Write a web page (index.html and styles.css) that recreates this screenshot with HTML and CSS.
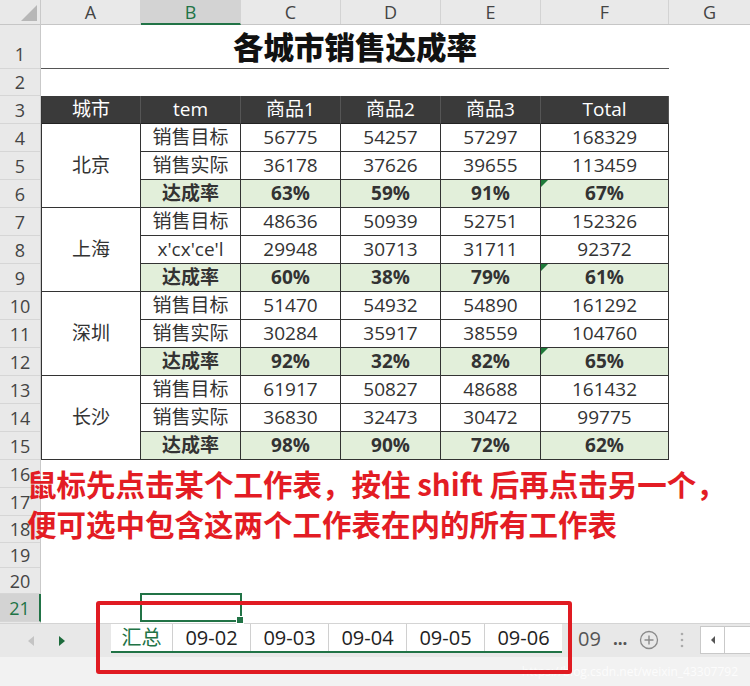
FILE: index.html
```html
<!DOCTYPE html>
<html lang="zh-CN">
<head>
    <meta charset="UTF-8">
    <meta name="viewport" content="width=device-width, initial-scale=1.0">
    <title>各城市销售达成率</title>
    <link rel="stylesheet" href="styles.css">
</head>
<body>
    <div class="app">
        <div class="sheet">
            <!-- row numbers -->
            <div class="rownums">
                <div class="corner">
                    <svg width="41" height="25" viewBox="0 0 41 25"><polygon points="21,21 37,21 37,5" fill="#b7b7b7"/></svg>
                </div>
                <div class="rn rn-title">1</div>
                <div class="rn rn-27">2</div>
                <div class="rn">3</div>
                <div class="rn">4</div>
                <div class="rn">5</div>
                <div class="rn">6</div>
                <div class="rn">7</div>
                <div class="rn">8</div>
                <div class="rn">9</div>
                <div class="rn">10</div>
                <div class="rn">11</div>
                <div class="rn">12</div>
                <div class="rn">13</div>
                <div class="rn">14</div>
                <div class="rn">15</div>
                <div class="rn">16</div>
                <div class="rn">17</div>
                <div class="rn rn-27">18</div>
                <div class="rn rn-25">19</div>
                <div class="rn rn-26">20</div>
                <div class="rn rn-active">21</div>
            </div>

            <div class="cells">
                <div class="colheads">
                    <div class="ch">A</div>
                    <div class="ch ch-active">B</div>
                    <div class="ch">C</div>
                    <div class="ch">D</div>
                    <div class="ch">E</div>
                    <div class="ch ch-wide">F</div>
                    <div class="ch ch-last">G</div>
                </div>

                <div class="title-row">
                    <div class="title">各城市销售达成率</div>
                </div>
                <div class="blank-row"></div>

                <div class="data">
                    <div class="c head">城市</div>
                    <div class="c head">tem</div>
                    <div class="c head">商品1</div>
                    <div class="c head">商品2</div>
                    <div class="c head">商品3</div>
                    <div class="c head">Total</div>

                    <div class="c city">北京</div>
                    <div class="c">销售目标</div><div class="c">56775</div><div class="c">54257</div><div class="c">57297</div><div class="c">168329</div>
                    <div class="c">销售实际</div><div class="c">36178</div><div class="c">37626</div><div class="c">39655</div><div class="c">113459</div>
                    <div class="c rate">达成率</div><div class="c rate">63%</div><div class="c rate">59%</div><div class="c rate">91%</div><div class="c rate flag">67%</div>

                    <div class="c city">上海</div>
                    <div class="c">销售目标</div><div class="c">48636</div><div class="c">50939</div><div class="c">52751</div><div class="c">152326</div>
                    <div class="c">x'cx'ce'l</div><div class="c">29948</div><div class="c">30713</div><div class="c">31711</div><div class="c">92372</div>
                    <div class="c rate">达成率</div><div class="c rate">60%</div><div class="c rate">38%</div><div class="c rate">79%</div><div class="c rate flag">61%</div>

                    <div class="c city">深圳</div>
                    <div class="c">销售目标</div><div class="c">51470</div><div class="c">54932</div><div class="c">54890</div><div class="c">161292</div>
                    <div class="c">销售实际</div><div class="c">30284</div><div class="c">35917</div><div class="c">38559</div><div class="c">104760</div>
                    <div class="c rate">达成率</div><div class="c rate">92%</div><div class="c rate">32%</div><div class="c rate">82%</div><div class="c rate flag">65%</div>

                    <div class="c city">长沙</div>
                    <div class="c">销售目标</div><div class="c">61917</div><div class="c">50827</div><div class="c">48688</div><div class="c">161432</div>
                    <div class="c">销售实际</div><div class="c">36830</div><div class="c">32473</div><div class="c">30472</div><div class="c">99775</div>
                    <div class="c rate">达成率</div><div class="c rate">98%</div><div class="c rate">90%</div><div class="c rate">72%</div><div class="c rate">62%</div>
                </div>

                <div class="blank-rows"></div>
                <div class="sel-row">
                    <div class="sel-cell"></div>
                </div>
            </div>
        </div>

        <div class="tabbar">
            <div class="tabnav">
                <svg class="nav-arrow" width="8" height="12" viewBox="0 0 8 12"><polygon points="7,1 1,6 7,11" fill="#c4c4c4"/></svg>
                <svg class="nav-arrow" width="8" height="12" viewBox="0 0 8 12"><polygon points="1,1 7,6 1,11" fill="#1d6b3c"/></svg>
            </div>
            <div class="tabs">
                <div class="tab tab-active">汇总</div>
                <div class="tab">09-02</div>
                <div class="tab">09-03</div>
                <div class="tab">09-04</div>
                <div class="tab">09-05</div>
                <div class="tab">09-06</div>
            </div>
            <div class="tab-more">09 <b>...</b></div>
            <svg class="add-sheet" width="20" height="20" viewBox="0 0 20 20">
                <circle cx="10" cy="10" r="8.5" fill="none" stroke="#8a8a8a" stroke-width="1.3"/>
                <path d="M10 5.5v9M5.5 10h9" stroke="#8a8a8a" stroke-width="1.4"/>
            </svg>
            <svg class="dots" width="4" height="16" viewBox="0 0 4 16">
                <circle cx="2" cy="2" r="1.3" fill="#ababab"/>
                <circle cx="2" cy="8" r="1.3" fill="#ababab"/>
                <circle cx="2" cy="14" r="1.3" fill="#ababab"/>
            </svg>
            <div class="hscroll">
                <div class="hscroll-btn">
                    <svg width="6" height="10" viewBox="0 0 6 10"><polygon points="5,1 1,5 5,9" fill="#555"/></svg>
                </div>
            </div>
        </div>

        <div class="statusbar">
            <span class="watermark">https://blog.csdn.net/weixin_43307792</span>
        </div>

        <p class="note">鼠标先点击某个工作表，按住 shift 后再点击另一个，<br>便可选中包含这两个工作表在内的所有工作表</p>
        <div class="callout"></div>
    </div>
</body>
</html>
```

FILE: styles.css
```css
* {
    margin: 0;
    padding: 0;
    box-sizing: border-box;
}

body {
    font-family: "Open Sans", "Noto Sans CJK SC", sans-serif;
    background: #ffffff;
    color: #333;
}

.app {
    position: relative;
    width: 750px;
    height: 686px;
    overflow: hidden;
}

.sheet {
    display: flex;
    height: 623px;
}

/* row numbers */
.rownums {
    width: 41px;
    background: #e9e9e9;
    border-right: 1px solid #c9c9c9;
    display: flex;
    flex-direction: column;
}

.corner {
    height: 25px;
    border-bottom: 1px solid #c6c6c6;
}

.corner svg {
    display: block;
}

.rn {
    height: 28px;
    border-bottom: 1px solid #d6d6d6;
    font-size: 18px;
    color: #444;
    display: flex;
    align-items: center;
    justify-content: center;
    line-height: 1;
}

.rn-title {
    height: 44px;
    align-items: flex-end;
    padding-bottom: 5px;
}

.rn-27 { height: 27px; }
.rn-25 { height: 25px; }
.rn-26 { height: 26px; }

.rn-active {
    background: #d3d3d3;
    color: #217346;
    border-right: 2px solid #217346;
    margin-right: -1px;
}

/* cell area */
.cells {
    flex: 1;
    display: flex;
    flex-direction: column;
}

.colheads {
    display: grid;
    grid-template-columns: 100px 100px 100px 100px 100px 128px 81px;
    height: 25px;
    background: #e9e9e9;
    border-bottom: 1px solid #c6c6c6;
}

.ch {
    border-right: 1px solid #d3d3d3;
    font-size: 18px;
    color: #444;
    display: flex;
    align-items: center;
    justify-content: center;
    line-height: 1;
}

.ch-last {
    border-right: none;
}

.ch-active {
    background: #d3d3d3;
    color: #217346;
    border-bottom: 2px solid #217346;
    margin-bottom: -1px;
}

.title-row {
    height: 44px;
}

.title {
    width: 628px;
    height: 44px;
    border-bottom: 1px solid #555;
    font-family: "Noto Sans CJK SC", sans-serif;
    font-size: 30.5px;
    font-weight: 900;
    color: #111;
    text-align: center;
    line-height: 42px;
}

.blank-row {
    height: 27px;
}

/* data table A3:F15 */
.data {
    display: grid;
    grid-template-columns: 99px 100px 100px 100px 100px 128px;
    grid-auto-rows: 28px;
    width: 628px;
    border-left: 1px solid #333;
}

.c {
    position: relative;
    border-right: 1px solid #333;
    border-bottom: 1px solid #333;
    font-size: 19px;
    color: #333;
    display: flex;
    align-items: center;
    justify-content: center;
    line-height: 1;
    white-space: nowrap;
}

.head {
    background: #3a3a3a;
    color: #fff;
    border-right-color: #555;
    border-bottom-color: #222;
}

.city {
    grid-row: span 3;
    background: #fff;
}

.rate {
    background: #e2efda;
    font-weight: 700;
}

.flag::before {
    content: "";
    position: absolute;
    left: 0;
    top: 0;
    border-top: 7px solid #1f7a3a;
    border-right: 7px solid transparent;
}

.blank-rows {
    height: 134px;
}

.sel-row {
    height: 28px;
    padding-left: 99px;
}

.sel-cell {
    position: relative;
    width: 102px;
    height: 29px;
    margin-top: -1px;
    border: 2px solid #217346;
}

.sel-cell::after {
    content: "";
    position: absolute;
    right: -4px;
    bottom: -4px;
    width: 6px;
    height: 6px;
    background: #217346;
    border: 1px solid #fff;
}

/* sheet tabs */
.tabbar {
    height: 34px;
    background: #e8e8e8;
    border-top: 1px solid #d4d4d4;
    display: flex;
    align-items: flex-start;
}

.tabnav {
    width: 111px;
    height: 33px;
    display: flex;
    align-items: center;
    gap: 23px;
    padding-left: 27px;
}

.nav-arrow {
    display: block;
}

.tabs {
    display: flex;
    height: 29px;
    background: #fff;
    border-bottom: 2px solid #217346;
}

.tab {
    width: 78px;
    height: 27px;
    font-size: 20px;
    color: #222;
    display: flex;
    align-items: center;
    justify-content: center;
    line-height: 1;
    border-left: 1px solid #d0d0d0;
}

.tab-active {
    width: 61px;
    color: #217346;
    border-left: none;
}

.tab-more {
    height: 29px;
    display: flex;
    align-items: center;
    gap: 12px;
    padding-left: 16px;
    font-size: 20px;
    color: #555;
    line-height: 1;
    white-space: nowrap;
}

.tab-more b {
    font-size: 17px;
}

.add-sheet {
    display: block;
    margin: 6px 0 0 12px;
}

.dots {
    display: block;
    margin: 8px 0 0 21px;
}

.hscroll {
    margin: 2px 0 0 16px;
    flex: 1;
    height: 28px;
    background: #fff;
    border: 1px solid #c9c9c9;
    border-right: none;
}

.hscroll-btn {
    width: 24px;
    height: 26px;
    border-right: 1px solid #c9c9c9;
    display: flex;
    align-items: center;
    justify-content: center;
}

.statusbar {
    height: 29px;
    background: #f2f2f2;
    display: flex;
    justify-content: flex-end;
    align-items: center;
    padding-right: 12px;
}

.watermark {
    font-size: 12px;
    color: #fcfcfc;
}

/* overlays */
.note {
    position: absolute;
    left: 27px;
    top: 463px;
    font-family: "Noto Sans CJK SC", sans-serif;
    font-size: 29.5px;
    font-weight: 700;
    line-height: 40px;
    color: #e31c24;
    white-space: nowrap;
}

.callout {
    position: absolute;
    left: 96px;
    top: 601px;
    width: 476px;
    height: 73px;
    border: 4px solid #e01b22;
    border-radius: 3px;
}
```
